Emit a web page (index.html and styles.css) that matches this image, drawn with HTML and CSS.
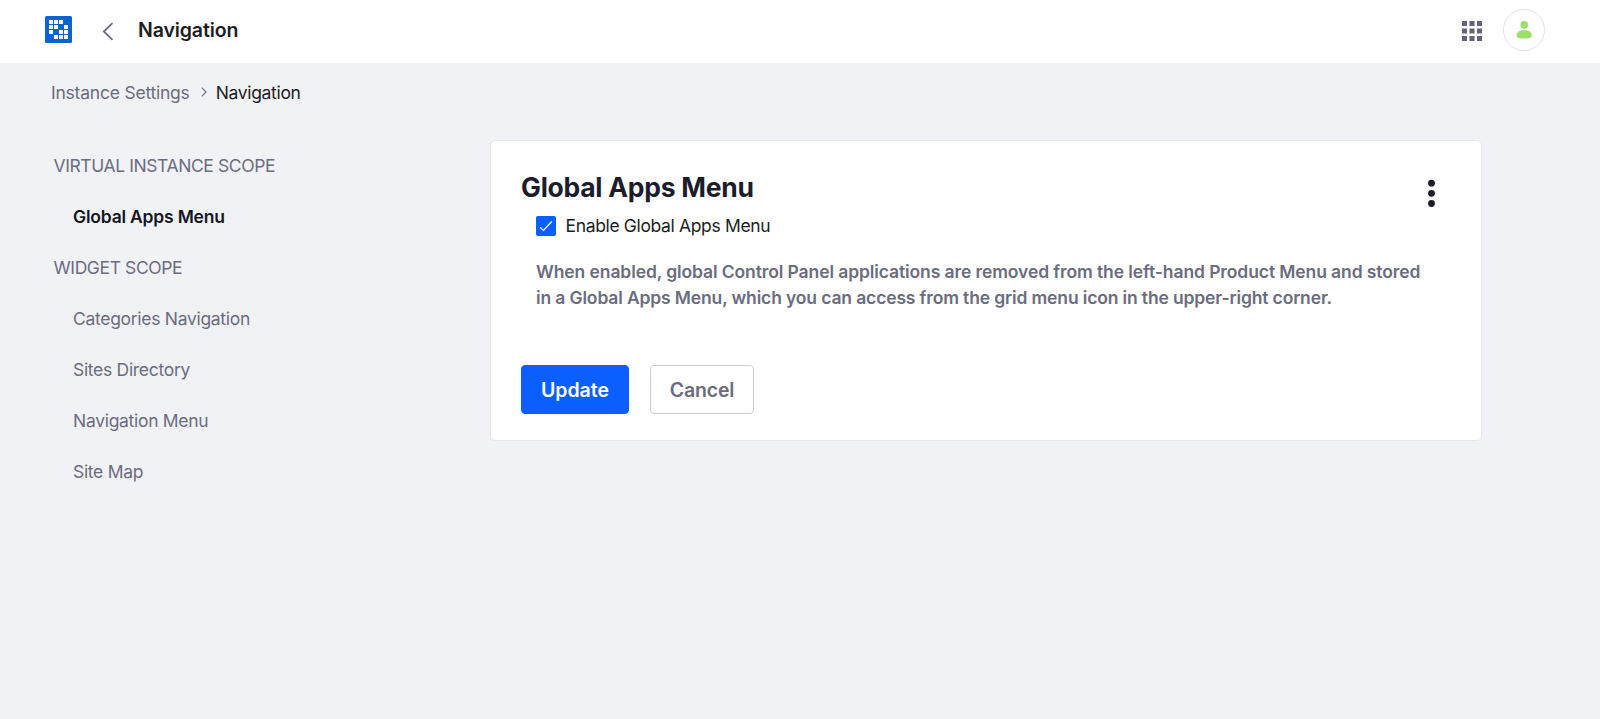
FILE: index.html
```html
<!DOCTYPE html>
<html lang="en">
<head>
<meta charset="utf-8">
<title>Navigation</title>
<link rel="stylesheet" href="styles.css">
</head>
<body>
<header class="topbar">
  <svg class="logo" width="27" height="27" viewBox="0 0 27 27">
    <rect width="27" height="27" rx="1.5" fill="#0b63ce"/>
    <path fill="#fff" d="M4 4h4v4H4zM9 4h4v4H9zM14 4h4v4h-4zM4 9h4v4H4zM9 9h4v4H9zM19 9h4v4h-4zM4 14h4v4H4zM14 14h4v4h-4zM19 14h4v4h-4zM9 19h4v4H9zM14 19h4v4h-4zM19 19h4v4h-4z"/>
  </svg>
  <svg class="back" width="12" height="19" viewBox="0 0 12 19" fill="none" stroke="#6b6c7e" stroke-width="1.8"><path d="M10.5 1.2 1.8 9.5l8.7 8.3"/></svg>
  <h1 class="page-title">Navigation</h1>
  <svg class="grid" width="20" height="20" viewBox="0 0 20 20" fill="#63627a"><path d="M0 0h5v5H0zM7.5 0h5v5h-5zM15 0h5v5h-5zM0 7.5h5v5H0zM7.5 7.5h5v5h-5zM15 7.5h5v5h-5zM0 15h5v5H0zM7.5 15h5v5h-5zM15 15h5v5h-5z"/></svg>
  <div class="avatar">
    <svg width="16" height="18" viewBox="0 0 16 18" fill="#9be169"><circle cx="8.2" cy="3.9" r="3.8"/><path d="M.7 14.2C.7 11 3.4 9.3 8.2 9.3s7.5 1.7 7.5 4.9c0 2.6-2 3.3-7.5 3.3S.7 16.8.7 14.2z"/></svg>
  </div>
</header>
<nav class="breadcrumb">
  <a class="crumb">Instance Settings</a>
  <svg class="sep" width="6" height="10" viewBox="0 0 6 10" fill="none" stroke="#6b6c7e" stroke-width="1.1"><path d="M.8.7 5 5 .8 9.3"/></svg>
  <span class="current">Navigation</span>
</nav>
<main class="content">
  <aside class="sidebar">
    <div class="scope">Virtual Instance Scope</div>
    <a class="item active">Global Apps Menu</a>
    <div class="scope">Widget Scope</div>
    <a class="item">Categories Navigation</a>
    <a class="item">Sites Directory</a>
    <a class="item">Navigation Menu</a>
    <a class="item">Site Map</a>
  </aside>
  <section class="card">
    <div class="card-head">
      <h2 class="card-title">Global Apps Menu</h2>
      <svg class="dots" width="7" height="28" viewBox="0 0 7 28" fill="#1c1c28"><circle cx="3.5" cy="4.2" r="3.4"/><circle cx="3.5" cy="14.3" r="3.4"/><circle cx="3.5" cy="24.5" r="3.4"/></svg>
    </div>
    <label class="check">
      <svg width="20" height="20" viewBox="0 0 20 20"><rect width="20" height="20" rx="2" fill="#0b5fff"/><path d="m4 11.2 3.5 3.3 8.3-9" fill="none" stroke="#fff" stroke-width="1.2"/></svg>
      <span class="check-text">Enable Global Apps Menu</span>
    </label>
    <p class="help"><span class="help-a">When enabled, global Control Panel applications are removed from the left-hand Product Menu and stored</span><br><span class="help-b">in a Global Apps Menu, which you can access from the grid menu icon in the upper-right corner.</span></p>
    <div class="actions">
      <button class="btn primary">Update</button>
      <button class="btn secondary">Cancel</button>
    </div>
  </section>
</main>
</body>
</html>
```
FILE: styles.css
```css
* { box-sizing: border-box; }
body {
  margin: 0;
  min-height: 719px;
  background: #f1f2f5;
  color: #1c1c24;
  font: 400 17.5px/26px Inter, "Liberation Sans", sans-serif;
}
svg { display: block; flex: none; }
.topbar {
  display: flex;
  align-items: center;
  height: 63px;
  padding: 0 55px 3px 45px;
  background: #fff;
}
.logo { margin-bottom: 1px; }
.back { margin-left: 30px; margin-top: 2px; }
.page-title { margin: 0 auto 0 24px; font-size: 19.5px; font-weight: 600; line-height: 26px; letter-spacing: -.12px; }
.grid { margin: 2px 21px 0 0; }
.avatar {
  display: flex;
  align-items: center;
  justify-content: center;
  width: 42px;
  height: 42px;
  border: 1px solid #e2e2e9;
  border-radius: 50%;
}
.breadcrumb { display: flex; align-items: center; height: 60px; padding-left: 51px; color: #6b6c7e; }
.crumb { letter-spacing: -.22px; }
.sep { margin: 0 9px 3px 11px; }
.current { color: #1c1c24; letter-spacing: -.32px; }
.content { display: flex; align-items: flex-start; padding-top: 17px; }
.sidebar { width: 490px; padding-left: 53.5px; color: #6b6c7e; }
.scope, .item { display: block; height: 50.95px; line-height: 52px; }
.scope { text-transform: uppercase; letter-spacing: -.4px; }
.item { padding-left: 19.5px; letter-spacing: -.3px; }
.active { color: #15151f; font-weight: 600; letter-spacing: -.2px; }
.card {
  width: 992px;
  height: 301px;
  padding: 34px 46px 0 30px;
  border: 1px solid #e5e6eb;
  border-radius: 5px;
  background: #fff;
}
.card-head { display: flex; justify-content: space-between; height: 41px; }
.card-title { margin: -3px 0 0; color: #1c1c2b; font-size: 26.5px; font-weight: 700; line-height: 30px; letter-spacing: -.26px; }
.dots { margin-top: 4px; }
.check { display: flex; align-items: center; gap: 9.5px; height: 20px; padding-left: 15px; }
.check-text { letter-spacing: -.35px; }
.help { margin: 23px 0 0; padding-left: 15px; color: #6b6c7e; font-weight: 600; white-space: nowrap; }
.help-a { letter-spacing: -.1px; }
.help-b { letter-spacing: -.14px; }
.actions { display: flex; gap: 21px; margin-top: 54px; }
.btn {
  height: 49px;
  padding: 1px 0 0;
  border: 1px solid #cdced9;
  border-radius: 4px;
  background: #fff;
  color: #6b6c7e;
  font: 600 19.5px/46px Inter, "Liberation Sans", sans-serif;
}
.primary { width: 108px; border-color: #0b5fff; background: #0b5fff; color: #fff; }
.secondary { width: 104px; letter-spacing: -.2px; }
```
